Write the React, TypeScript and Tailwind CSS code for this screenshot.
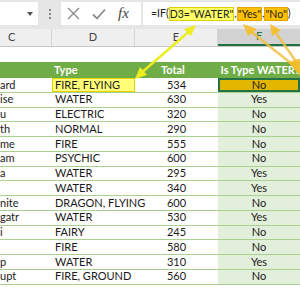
import React from "react";

type Row = { name: string; type: string; total: string; water: string };

const rows: Row[] = [
  { name: "ard", type: "FIRE, FLYING", total: "534", water: "No" },
  { name: "ise", type: "WATER", total: "630", water: "Yes" },
  { name: "u", type: "ELECTRIC", total: "320", water: "No" },
  { name: "th", type: "NORMAL", total: "290", water: "No" },
  { name: "me", type: "FIRE", total: "555", water: "No" },
  { name: "am", type: "PSYCHIC", total: "600", water: "No" },
  { name: "a", type: "WATER", total: "295", water: "Yes" },
  { name: "", type: "WATER", total: "340", water: "Yes" },
  { name: "nite", type: "DRAGON, FLYING", total: "600", water: "No" },
  { name: "gatr", type: "WATER", total: "530", water: "Yes" },
  { name: "i", type: "FAIRY", total: "245", water: "No" },
  { name: "", type: "FIRE", total: "580", water: "No" },
  { name: "p", type: "WATER", total: "310", water: "Yes" },
  { name: "upt", type: "FIRE, GROUND", total: "560", water: "No" },
];

function FormulaBar() {
  return (
    <div className="flex h-[29px] items-start bg-[#e6e6e6] pt-[2px]">
      {/* name box */}
      <div className="relative h-[23px] w-[38px] bg-white">
        <svg className="absolute left-[27px] top-[10px]" width="6" height="4" viewBox="0 0 6 4">
          <path d="M0 0h6L3 4z" fill="#555" />
        </svg>
      </div>
      <div className="flex h-[23px] w-[23px] flex-col items-center justify-center gap-[2px]">
        <span className="block h-[2px] w-[2px] bg-[#888]" />
        <span className="block h-[2px] w-[2px] bg-[#888]" />
        <span className="block h-[2px] w-[2px] bg-[#888]" />
      </div>
      {/* cancel / enter / fx */}
      <div className="flex h-[23px] w-[80px] items-center bg-white">
        <svg className="ml-[6px]" width="13" height="13" viewBox="0 0 13 13">
          <path d="M1 1L12 12M12 1L1 12" stroke="#8c8c8c" strokeWidth="1.4" />
        </svg>
        <svg className="ml-[12px]" width="14" height="12" viewBox="0 0 14 12">
          <path d="M1 6.5L5 10.5L13 1.5" stroke="#8c8c8c" strokeWidth="1.8" fill="none" />
        </svg>
        <span className="ml-[12px] font-['Liberation_Serif',serif] text-[15px] italic leading-none text-[#444]">
          fx
        </span>
      </div>
      <div className="ml-[2px] flex h-[23px] flex-1 items-center whitespace-nowrap bg-white pl-[8px] font-['Lato',sans-serif] text-[10.5px] text-[#222]">
        <span>=IF(</span>
        <span className="border border-[#e3cf00] bg-[#ffff66] leading-[12px]">D3="WATER"</span>
        <span>,</span>
        <span className="border border-[#e6a800] bg-[#ffc000] leading-[12px]">"Yes"</span>
        <span>,</span>
        <span className="border border-[#e6a800] bg-[#ffc000] leading-[12px]">"No"</span>
        <span>)</span>
      </div>
    </div>
  );
}

function ColumnHeaders() {
  return (
    <div className="flex h-[18px] border-b border-[#c6c6c6] bg-[#efefef] font-['Lato',sans-serif] text-[11px] text-[#444]">
      <div className="flex w-[52px] items-center border-r border-[#d4d4d4] pl-[8px]">C</div>
      <div className="flex w-[83px] items-center justify-center border-r border-[#d4d4d4]">D</div>
      <div className="flex w-[83px] items-center justify-center border-r border-[#d4d4d4]">E</div>
      <div className="flex flex-1 items-center justify-center border-b-2 border-[#217346] bg-[#d2d2d2] text-[#217346]">
        F
      </div>
    </div>
  );
}

export default function App() {
  return (
    <div className="relative h-[300px] w-[300px] overflow-hidden bg-white font-['Lato',sans-serif] text-[11px] text-[#1a1a1a]">
      <FormulaBar />
      <ColumnHeaders />
      <div className="h-[15px]" />
      {/* table header */}
      <div className="flex h-[16px] bg-[#70ad47] font-bold text-white">
        <div className="w-[52px]" />
        <div className="flex w-[83px] items-center pl-[3px]">Type</div>
        <div className="flex w-[83px] items-center justify-center">Total</div>
        <div className="flex flex-1 items-center whitespace-nowrap pl-[7px]">Is Type WATER?</div>
      </div>
      {rows.map((r, i) => (
        <div key={i} className="flex h-[14.75px] whitespace-nowrap border-b border-[#a9d08e]">
          <div className="flex w-[52px] items-center overflow-hidden">{r.name}</div>
          <div
            className={
              i === 0
                ? "flex w-[83px] items-center border border-[#e3d400] bg-[#ffff7a] pl-[2px]"
                : "flex w-[83px] items-center pl-[3px]"
            }
          >
            {r.type}
          </div>
          <div className="flex w-[83px] items-center justify-center">{r.total}</div>
          <div
            className={
              i === 0
                ? "flex flex-1 items-center justify-center border-2 border-[#217346] bg-[#e3b600]"
                : "flex flex-1 items-center justify-center bg-[#e2efda]"
            }
          >
            {r.water}
          </div>
        </div>
      ))}

      {/* callout arrows */}
      <svg className="pointer-events-none absolute left-0 top-0" width="300" height="300" viewBox="0 0 300 300">
        <g stroke="#f0c040" strokeWidth="2.5" strokeOpacity="0.85" fill="none">
          <line x1="302" y1="72" x2="249" y2="30" />
          <line x1="302" y1="70" x2="274" y2="30" />
        </g>
        <g fill="#f5be2a" fillOpacity="0.9">
          <polygon points="243,24 257,29 248,36" />
          <polygon points="270,24 281,30 272,36" />
          <polygon points="288,62 302,58 302,78" />
        </g>
        <line x1="192" y1="29" x2="140" y2="74" stroke="#ecec20" strokeWidth="2.5" />
        <g fill="#ecec20">
          <polygon points="196,25 184,29 191,36" />
          <polygon points="135,79 140,67 147,75" />
        </g>
      </svg>
    </div>
  );
}
